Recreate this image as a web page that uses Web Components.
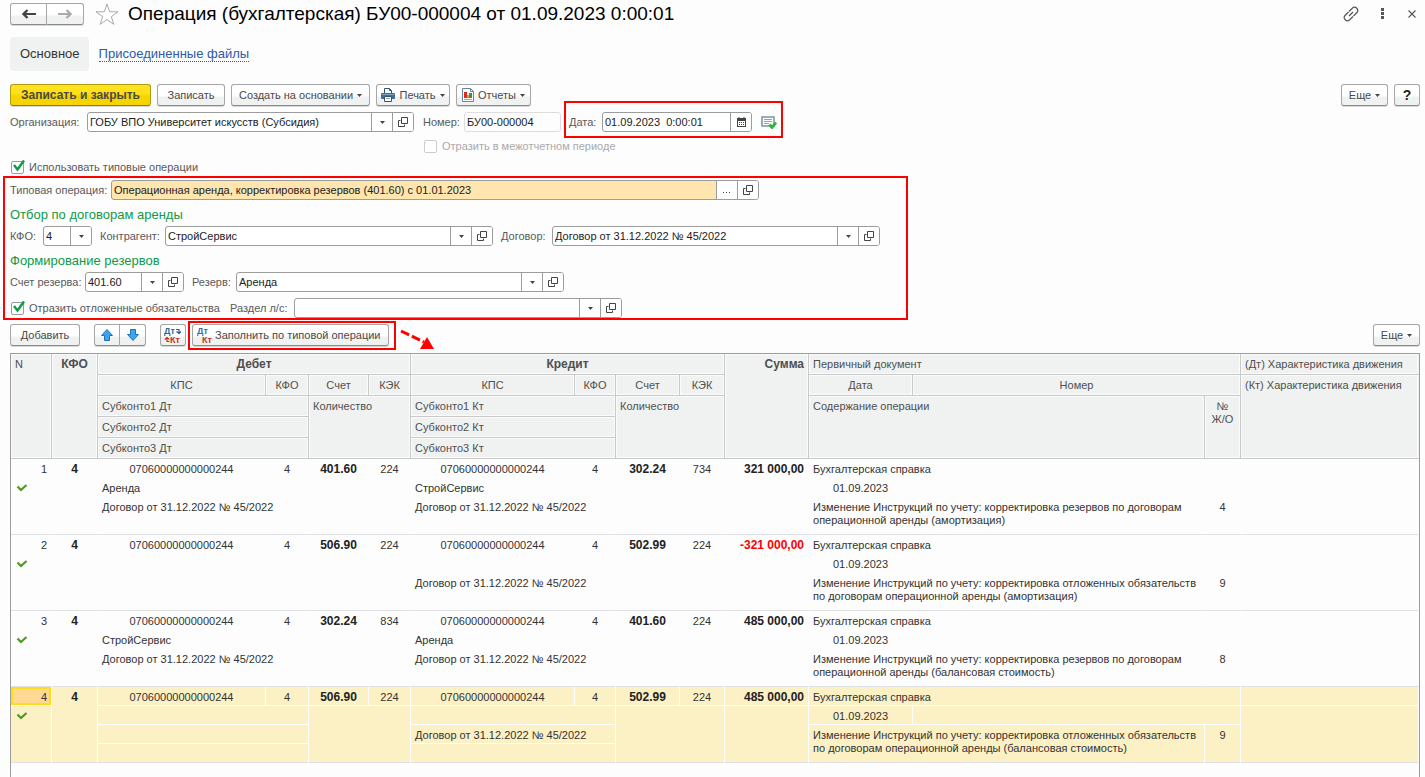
<!DOCTYPE html>
<html lang="ru">
<head>
<meta charset="utf-8">
<title>Операция (бухгалтерская)</title>
<style>
html,body{margin:0;padding:0}
body{font:11px/14px "Liberation Sans",Arial,sans-serif;color:#4a4a4a;background:#fdfdfd}
</style>
</head>
<body>
<operation-form></operation-form>
<script>
const define=(name,html,setup)=>{
  const t=document.createElement('template');
  t.innerHTML=html;
  customElements.define(name,class extends HTMLElement{
    connectedCallback(){
      if(this.shadowRoot)return;
      this.attachShadow({mode:'open'}).append(t.content.cloneNode(true));
      if(setup)setup(this,this.shadowRoot);
    }
  });
};

const ICONS={
  back:[16,12,'<path d="M2 6H15" stroke="#444" stroke-width="2"/><path d="M6.500 2 2.500 6l4 4" fill="none" stroke="#444" stroke-width="2.400"/>'],
  forward:[16,12,'<path d="M1 6h13" stroke="#aaa" stroke-width="2"/><path d="M9.500 2l4 4-4 4" fill="none" stroke="#aaa" stroke-width="2.400"/>'],
  star:[24,22,'<path d="M12 1l2.700 7.800h8.300l-6.700 4.900 2.600 7.700-6.900-4.800-6.900 4.800 2.600-7.700L1 8.800h8.300z" fill="#fff" stroke="#aaa"/>'],
  link:[16,16,'<g fill="none" stroke="#555" stroke-width="1.200"><path d="M6 5.500 9.500 2a3.200 3.200 0 0 1 4.500 4.500L10.500 10"/><path d="M10 10.500 6.500 14A3.200 3.200 0 0 1 2 9.500L5.500 6"/><path d="M6 10l4-4"/></g>'],
  dots:[4,12,'<g fill="#555"><rect x="1" width="3" height="3"/><rect x="1" y="4" width="3" height="3"/><rect x="1" y="8" width="3" height="3"/></g>'],
  close:[8,8,'<path d="M.5.5l7 7M7.500.5l-7 7" stroke="#555" stroke-width="1.100"/>'],
  drop:[5,3,'<path d="M0 0h5L2.500 3z" fill="#444"/>'],
  open:[10,10,'<path d="M3.500.5h6v6h-6zM2.500 3.500h-2v6h6v-2" fill="none" stroke="#444"/>'],
  dotsh:[8,8,'<g fill="#444"><rect y="6" width="1" height="1"/><rect x="3" y="6" width="1" height="1"/><rect x="6" y="6" width="1" height="1"/></g>'],
  calendar:[9,10,'<path d="M0 1h9v9H0z" fill="#444"/><path d="M1 4h7v5H1z" fill="#fff"/><path d="M2 0v2M7 0v2" stroke="#444"/><path d="M2 5.500h5M2 7.500h5" stroke="#444" stroke-dasharray="1 1"/>'],
  print:[14,14,'<path d="M3.500 5V.5h5l2 2V5" fill="#fff" stroke="#35536e"/><path d="M8.500.5v2h2" fill="none" stroke="#35536e"/><rect y="5" width="14" height="6" rx="1" fill="#3f6f9b"/><rect x="1" y="6" width="12" height="1" fill="#7ba5c8"/><path d="M3.500 8.500h7v5h-7z" fill="#fff" stroke="#35536e"/><path d="M5 10.500h4" stroke="#8aa"/>'],
  report:[12,14,'<path d="M.5.500h8l3 3v10H.5z" fill="#fff" stroke="#6d8397"/><path d="M8.500.5v3h3" fill="none" stroke="#6d8397"/><path d="M2 11.500h8" stroke="#9ab"/><rect x="2" y="4" width="3" height="6" fill="#d92b1f"/><rect x="5" y="7" width="2" height="3" fill="#f0912b"/><rect x="7" y="5" width="3" height="5" fill="#2e9b38"/>'],
  posted:[16,13,'<path d="M1 1h12v9H1z" fill="#fff" stroke="#7b93a8" stroke-width="1.500"/><path d="M3 3.500h8M3 5.500h8M3 7.500h5" stroke="#8fa3b5"/><path d="M8.500 8.500l2.500 3L15 6.500" fill="none" stroke="#2eb33a" stroke-width="2.800"/>'],
  up:[12,12,'<path d="M6 .5 11.500 6.500H8.500v5h-5v-5H.5z" fill="#3aa5f0" stroke="#2370b5"/>'],
  down:[12,12,'<path d="M6 11.500.5 5.500h3v-5h5v5h3z" fill="#3aa5f0" stroke="#2370b5"/>'],
  swap:[18,18,'<g font-family="Liberation Sans,Arial,sans-serif" font-weight="700" font-size="9"><text x="0" y="8" fill="#1b6f9c">Дт</text><text x="6" y="17" fill="#c8301c">Кт</text></g><path d="M12 3.500h3V7M12.500 5.500l2.500 2 2-2" fill="none" stroke="#1b5f8c" stroke-width="1.200"/><path d="M5.500 15.500H3V12M.8 13.500l2.200-2 2.200 2" fill="none" stroke="#c8301c" stroke-width="1.200"/>'],
  dtkt:[16,18,'<g font-family="Liberation Sans,Arial,sans-serif" font-weight="700" font-size="9"><text x="0" y="8" fill="#3d6f9e">Дт</text><text x="5" y="17" fill="#c8301c">Кт</text></g>'],
  tick:[12,9,'<path d="M1.500 3.500 5 7l5.500-5" fill="none" stroke="#4a9a24" stroke-width="2.200"/>'],
  arrow:[36,22,'<path d="M1 3l23 11" fill="none" stroke="#f00" stroke-width="3" stroke-dasharray="9 3"/><path d="M27 9l7 12H20z" fill="#f00"/>']
};
define('ui-icon','<style>:host{display:inline-flex;flex:none}svg{display:block}</style>',(el,root)=>{
  const [w,h,body]=ICONS[el.getAttribute('name')];
  root.innerHTML+=`<svg width="${w}" height="${h}" viewBox="0 0 ${w} ${h}" aria-hidden="true">${body}</svg>`;
});

define('ui-button',`<style>
:host{display:inline-flex;flex:none}
button{display:flex;align-items:center;justify-content:center;gap:4px;box-sizing:border-box;width:100%;height:22px;margin:0;padding:0 4px;border:1px solid #a6a6a6;border-bottom-color:#8a8a8a;border-radius:3px;background:linear-gradient(#fff 0 55%,#f0f1f1 60%);box-shadow:0 1px 0 #d8d8d8;font:inherit;font-size:11px;color:#4a4a4a;white-space:nowrap}
:host([primary]) button{background:linear-gradient(#ffe21c 0 40%,#f5d400 55%);border-color:#b09a10;border-bottom-color:#8f7d08;font-size:12px;font-weight:700}
:host([left]) button{border-radius:3px 0 0 3px}
:host([right]) button{border-radius:0 3px 3px 0;border-left:0}
:host([help]) button{font-size:14px;font-weight:700;color:#222}
:host([tight]) button{gap:2px;justify-content:flex-start}
</style><button type="button"><slot></slot></button>`,(el,root)=>{
  if(el.hasAttribute('label'))root.querySelector('button').setAttribute('aria-label',el.getAttribute('label'));
  if(el.hasAttribute('menu')){
    root.querySelector('button').insertAdjacentHTML('beforeend','<ui-icon name="drop"></ui-icon>');
    root.querySelector('button').setAttribute('aria-haspopup','menu');
  }
});

define('ui-field',`<style>
:host{display:flex;align-items:center;flex:0 1 auto;min-width:0;height:20px}
label{flex:none;width:var(--label);white-space:nowrap;color:#5a5a5a}
.box{display:flex;box-sizing:border-box;flex:0 1 auto;width:var(--box);min-width:0;height:20px;border:1px solid #9c9c9c;border-radius:3px;background:#fff;overflow:hidden}
input{flex:1;min-width:0;width:0;margin:0;padding:0 2px;border:0;background:none;font:inherit;color:#222;outline:0}
button{flex:none;display:flex;align-items:center;justify-content:center;box-sizing:border-box;width:21px;margin:0;padding:0;border:0;border-left:1px solid #9c9c9c;background:#fff}
:host([accent]) .box{background:#ffe5ae}
:host([readonly]) .box{border-color:#ddd;background:#fdfdfd}
</style><label for="i"></label><div class="box"><input id="i" type="text"></div>`,(el,root)=>{
  root.querySelector('label').textContent=el.getAttribute('label');
  const input=root.querySelector('input');
  input.value=el.getAttribute('value')||'';
  input.readOnly=el.hasAttribute('readonly');
  const names={drop:'Выбрать из списка',open:'Открыть',calendar:'Календарь',dotsh:'Выбрать'};
  for(const b of (el.getAttribute('buttons')||'').split(' ').filter(Boolean))
    root.querySelector('.box').insertAdjacentHTML('beforeend',`<button type="button" aria-label="${names[b]}"><ui-icon name="${b}"></ui-icon></button>`);
});

define('ui-check',`<style>
:host{display:flex;align-items:center;height:14px}
label{display:flex;align-items:center;gap:5px;color:#5a5a5a;white-space:nowrap}
.mark{position:relative;display:flex}
input{appearance:none;flex:none;box-sizing:border-box;width:13px;height:13px;margin:0;border:1px solid #9c9c9c;border-radius:2px;background:#fff}
svg{position:absolute;left:1px;top:-2px;display:none;pointer-events:none}
input:checked+svg{display:block}
:host([disabled]) label{color:#aaa}
:host([disabled]) input{border-color:#ccc}
</style><label><span class="mark"><input type="checkbox"><svg width="13" height="13" viewBox="0 0 13 13"><path d="M2 6l3.500 4.500L12 1.500" fill="none" stroke="#0f9a48" stroke-width="2.400"/></svg></span><slot></slot></label>`,(el,root)=>{
  const i=root.querySelector('input');
  i.checked=el.hasAttribute('checked');
  i.disabled=el.hasAttribute('disabled');
});

/* Red frame that calls attention to the slotted controls; --out is the distance from them. */
define('call-out',`<style>
:host{display:flex;flex-direction:column;position:relative}
.frame{position:absolute;inset:var(--out);border:2px solid #f00;pointer-events:none}
</style><slot></slot><div class="frame"></div>`);

define('title-bar',`<style>
:host{display:flex;align-items:center;height:28px}
.nav{display:flex;margin-right:11px}
.nav ui-button{width:37px}
h1{flex:1;min-width:0;margin:0 0 0 9px;font-size:19px;line-height:30px;font-weight:400;color:#000;white-space:nowrap}
.plain{border:0;background:none;padding:0;margin:0;display:flex}
.tools{display:flex;align-items:center;gap:21px;margin-right:4px}
.tools .plain:nth-child(2){margin-right:3px}
</style>
<div class="nav"><ui-button left label="Назад"><ui-icon name="back"></ui-icon></ui-button><ui-button right label="Вперед"><ui-icon name="forward"></ui-icon></ui-button></div>
<button class="plain" aria-label="Избранное"><ui-icon name="star"></ui-icon></button>
<h1><slot></slot></h1>
<div class="tools"><button class="plain" aria-label="Ссылка"><ui-icon name="link"></ui-icon></button><button class="plain" aria-label="Меню"><ui-icon name="dots"></ui-icon></button><button class="plain" aria-label="Закрыть"><ui-icon name="close"></ui-icon></button></div>`);

define('form-tabs',`<style>
:host{display:flex;align-items:center;gap:10px;height:34px;font-size:13px}
a{color:#2e5aa8;text-decoration:none;line-height:15px}
.on{box-sizing:border-box;height:34px;padding:0 9px 0 10px;line-height:34px;border-radius:4px;background:#f0f2f2;color:#333}
.off{border-bottom:1px dotted #2e5aa8}
</style><a class="on" href="#main">Основное</a><a class="off" href="#files">Присоединенные файлы</a>`);

const DOC='Договор от 31.12.2022 № 45/2022', KPS='07060000000000244';
const ROWS=[
  {n:1,d:['401.60','224','Аренда',DOC],k:['302.24','734','СтройСервис',DOC],s:'321 000,00',t:'Изменение Инструкций по учету: корректировка резервов по договорам<br>операционной аренды (амортизация)',j:4},
  {n:2,d:['506.90','224','',''],k:['502.99','224','',DOC],s:'-321 000,00',t:'Изменение Инструкций по учету: корректировка отложенных обязательств<br>по договорам операционной аренды (амортизация)',j:9},
  {n:3,d:['302.24','834','СтройСервис',DOC],k:['401.60','224','Аренда',DOC],s:'485 000,00',t:'Изменение Инструкций по учету: корректировка резервов по договорам<br>операционной аренды (балансовая стоимость)',j:8},
  {n:4,d:['506.90','224','',''],k:['502.99','224','',DOC],s:'485 000,00',t:'Изменение Инструкций по учету: корректировка отложенных обязательств<br>по договорам операционной аренды (балансовая стоимость)',j:9,sel:true}
];
define('entries-table',`<style>
:host{display:block;border:1px solid #9c9c9c;border-bottom:0}
table{width:100%;table-layout:fixed;border-collapse:separate;border-spacing:0}
th,td{box-sizing:border-box;padding:0 4px;overflow:hidden;white-space:nowrap;text-align:left;vertical-align:top;font-weight:400}
thead tr{height:21px}
th{height:21px;line-height:20px;color:#4f4f4f;background:#f0f2f2;border-right:1px solid #c9c9c9;border-bottom:1px solid #c9c9c9;box-shadow:inset 0 0 0 1px #fafbfb}
th:last-child{border-right-color:#f0f2f2}
thead tr:nth-child(n+3) th:last-child{border-right-color:#c9c9c9}
th.tall{line-height:13px;padding-top:4px}
tbody tr{height:19px}
td{height:19px;padding-top:2px;line-height:16px;color:#333;border-right:1px solid transparent;border-bottom:1px solid transparent}
.c{text-align:center}.r{text-align:right}
.b{font-weight:700;font-size:12px}
tbody .b{color:#222}
tbody td.neg{color:#f00}
td.text{line-height:13px;padding-top:4px}
td.mark{padding:5px 5px 0}
.mark ui-icon{display:flex}
.end{border-bottom-color:#dfe0e4}
.sel td{background:#fcf0c5;border-right-color:#fff;border-bottom-color:#fff}
.sel td.end{border-bottom-color:#dfe0e4}
.sel td.cur{background:#ffd994;box-shadow:inset 0 0 0 2px #ffdc1c}
</style>
<table><colgroup></colgroup>
<thead>
<tr><th rowspan="5">N</th><th rowspan="5" class="c b">КФО</th><th colspan="4" class="c b">Дебет</th><th colspan="4" class="c b">Кредит</th><th rowspan="5" class="r b">Сумма</th><th colspan="3">Первичный документ</th><th>(Дт) Характеристика движения</th></tr>
<tr><th class="c">КПС</th><th class="c">КФО</th><th class="c">Счет</th><th class="c">КЭК</th><th class="c">КПС</th><th class="c">КФО</th><th class="c">Счет</th><th class="c">КЭК</th><th class="c">Дата</th><th colspan="2" class="c">Номер</th><th rowspan="4">(Кт) Характеристика движения</th></tr>
<tr><th colspan="2">Субконто1 Дт</th><th colspan="2" rowspan="3">Количество</th><th colspan="2">Субконто1 Кт</th><th colspan="2" rowspan="3">Количество</th><th colspan="2" rowspan="3">Содержание операции</th><th rowspan="3" class="c tall">№<br>Ж/О</th></tr>
<tr><th colspan="2">Субконто2 Дт</th><th colspan="2">Субконто2 Кт</th></tr>
<tr><th colspan="2">Субконто3 Дт</th><th colspan="2">Субконто3 Кт</th></tr>
</thead></table>`,(el,root)=>{
  root.querySelector('colgroup').innerHTML=[41,46,168,43,60,42,164,41,64,45,84,104,0,36,178].map(w=>w?`<col style="width:${w}px">`:'<col>').join('');
  const side=a=>`<td class="c">${KPS}</td><td class="c">4</td><td class="c b">${a[0]}</td><td class="c">${a[1]}</td>`;
  root.querySelector('table').insertAdjacentHTML('beforeend',ROWS.map(r=>`<tbody class="${r.sel?'sel':''}">
<tr><td class="r ${r.sel?'cur':''}">${r.n}</td><td rowspan="4" class="c b end">4</td>${side(r.d)}${side(r.k)}<td class="r b ${r.s[0]=='-'?'neg':''}">${r.s}</td><td colspan="3">Бухгалтерская справка</td><td></td></tr>
<tr><td rowspan="3" class="mark end"><ui-icon name="tick"></ui-icon></td><td colspan="2">${r.d[2]}</td><td colspan="2" rowspan="3" class="end"></td><td colspan="2">${r.k[2]}</td><td colspan="2" rowspan="3" class="end"></td><td rowspan="3" class="end"></td><td class="c">01.09.2023</td><td colspan="2"></td><td rowspan="3" class="end"></td></tr>
<tr><td colspan="2">${r.d[3]}</td><td colspan="2">${r.k[3]}</td><td colspan="2" rowspan="2" class="text end">${r.t}</td><td rowspan="2" class="c end">${r.j}</td></tr>
<tr><td colspan="2" class="end"></td><td colspan="2" class="end"></td></tr></tbody>`).join(''));
});

define('operation-form',`<style>
:host{display:flex;flex-direction:column;box-sizing:border-box;min-height:100vh;padding:0 5px 0 10px}
.bar,.row{display:flex;align-items:center}
.bar{gap:6px;position:relative}
.row{gap:8px}
.grow{flex:1}
form-tabs{margin:9px 0 13px}
.head{display:grid;grid-template-columns:404px 138px 182px auto;column-gap:9px;row-gap:7px;justify-content:start;align-items:center;margin:6px 0 7px}
.head ui-check{grid-column:2 / 5;margin-left:1px}
.date{margin-left:-1px}
.group{margin-top:6px}
.group ui-check,.use{margin-left:1px}
h2{margin:0;font-size:13px;line-height:30px;height:26px;font-weight:400;color:#0f9a48}
.last{margin-top:6px}
.fill{margin:6px 0 7px}
.pair{display:flex;margin:0 8px}
.pair ui-button,.sq{width:26px}
.pointer{position:absolute;left:390px;top:4px}
entries-table{flex:1}
</style>
<title-bar>Операция (бухгалтерская) БУ00-000004 от 01.09.2023 0:00:01</title-bar>
<form-tabs></form-tabs>
<div class="bar">
<ui-button primary style="width:141px">Записать и закрыть</ui-button>
<ui-button style="width:68px">Записать</ui-button>
<ui-button menu style="width:139px">Создать на основании</ui-button>
<ui-button menu style="width:74px"><ui-icon name="print"></ui-icon>Печать</ui-button>
<ui-button menu style="width:75px"><ui-icon name="report"></ui-icon>Отчеты</ui-button>
<span class="grow"></span>
<ui-button menu style="width:47px">Еще</ui-button>
<ui-button help class="sq" label="Справка">?</ui-button>
</div>
<div class="head">
<ui-field label="Организация:" value="ГОБУ ВПО Университет искусств (Субсидия)" buttons="drop open" style="--label:77px;--box:327px"></ui-field>
<ui-field label="Номер:" value="БУ00-000004" readonly style="--label:41px;--box:97px"></ui-field>
<call-out class="date" style="--out:-11px -31px -6px -5px"><ui-field label="Дата:" value="01.09.2023  0:00:01" buttons="calendar" style="--label:33px;--box:150px"></ui-field></call-out>
<ui-icon name="posted"></ui-icon>
<ui-check disabled>Отразить в межотчетном периоде</ui-check>
</div>
<ui-check class="use" checked>Использовать типовые операции</ui-check>
<call-out class="group" style="--out:-4px 512px -2px -7px">
<ui-field accent label="Типовая операция:" value="Операционная аренда, корректировка резервов (401.60) с 01.01.2023" buttons="dotsh open" style="--label:101px;--box:648px"></ui-field>
<h2>Отбор по договорам аренды</h2>
<div class="row">
<ui-field label="КФО:" value="4" buttons="drop" style="--label:33px;--box:49px"></ui-field>
<ui-field label="Контрагент:" value="СтройСервис" buttons="drop open" style="--label:65px;--box:328px"></ui-field>
<ui-field label="Договор:" value="Договор от 31.12.2022 № 45/2022" buttons="drop open" style="--label:51px;--box:328px"></ui-field>
</div>
<h2>Формирование резервов</h2>
<div class="row">
<ui-field label="Счет резерва:" value="401.60" buttons="drop open" style="--label:75px;--box:99px"></ui-field>
<ui-field label="Резерв:" value="Аренда" buttons="drop open" style="--label:44px;--box:328px"></ui-field>
</div>
<div class="row last">
<ui-check checked style="width:211px">Отразить отложенные обязательства</ui-check>
<ui-field label="Раздел л/с:" value="" buttons="drop open" style="--label:64px;--box:328px"></ui-field>
</div>
</call-out>
<div class="bar fill">
<ui-button style="width:70px">Добавить</ui-button>
<span class="pair"><ui-button left label="Вверх"><ui-icon name="up"></ui-icon></ui-button><ui-button right label="Вниз"><ui-icon name="down"></ui-icon></ui-button></span>
<ui-button class="sq" label="Дебет и кредит местами"><ui-icon name="swap"></ui-icon></ui-button>
<call-out style="--out:-3px -7px -4px -4px"><ui-button tight style="width:197px"><ui-icon name="dtkt"></ui-icon>Заполнить по типовой операции</ui-button></call-out>
<ui-icon class="pointer" name="arrow"></ui-icon>
<span class="grow"></span>
<ui-button menu style="width:47px">Еще</ui-button>
</div>
<entries-table></entries-table>`);
</script>
</body>
</html>
